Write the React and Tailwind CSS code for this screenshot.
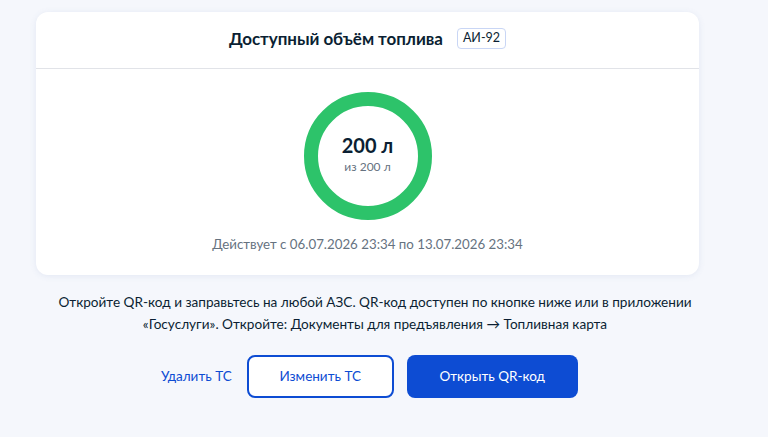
export default function App() {
  return (
    <div className="min-h-[437px] w-[768px] bg-[#f5f7fc] pt-[12px] font-['Lato',sans-serif] text-[#0b1f33]">
      <div className="ml-[36px] w-[663px] rounded-[12px] bg-white shadow-[0_1px_6px_rgba(100,120,180,0.12)]">
        <div className="flex h-[57px] items-center justify-center gap-[14px] border-b border-[#e1e3e8] pb-[3px]">
          <span className="text-[17px] font-bold leading-none tracking-[-0.05px]">Доступный объём топлива</span>
          <span className="rounded-[4px] border border-[#c9d6f5] px-[5px] py-[3px] text-[12.5px] leading-none text-[#0b1f33]">АИ-92</span>
        </div>
        <div className="flex flex-col items-center pt-[23px] pb-[21px]">
          <div className="flex h-[128px] w-[128px] flex-col items-center justify-center rounded-full border-[14px] border-[#2dc36a] pb-[6px]">
            <span className="text-[20px] font-bold leading-[24px]">200 л</span>
            <span className="mt-[3px] text-[12px] leading-[14px] text-[#66727f]">из 200 л</span>
          </div>
          <div className="mt-[14px] text-[13.3px] leading-[20px] text-[#66727f]">Действует с 06.07.2026 23:34 по 13.07.2026 23:34</div>
        </div>
      </div>
      <p className="ml-[36px] w-[678px] mt-[16px] text-center text-[13.6px] leading-[22px]">
        Откройте QR-код и заправьтесь на любой АЗС. QR-код доступен по кнопке ниже или в приложении<br />«Госуслуги». Откройте: Документы для предъявления → Топливная карта
      </p>
      <div className="ml-[161px] mt-[20px] flex items-center">
        <button className="text-[13.5px] text-[#0d4cd3]">Удалить ТС</button>
        <button className="ml-[15px] h-[43px] w-[147px] rounded-[8px] border-2 border-[#0d4cd3] bg-white text-[13.5px] text-[#0d4cd3]">Изменить ТС</button>
        <button className="ml-[13px] h-[43px] w-[171px] rounded-[8px] bg-[#0d4cd3] text-[13.5px] text-white">Открыть QR-код</button>
      </div>
    </div>
  );
}
